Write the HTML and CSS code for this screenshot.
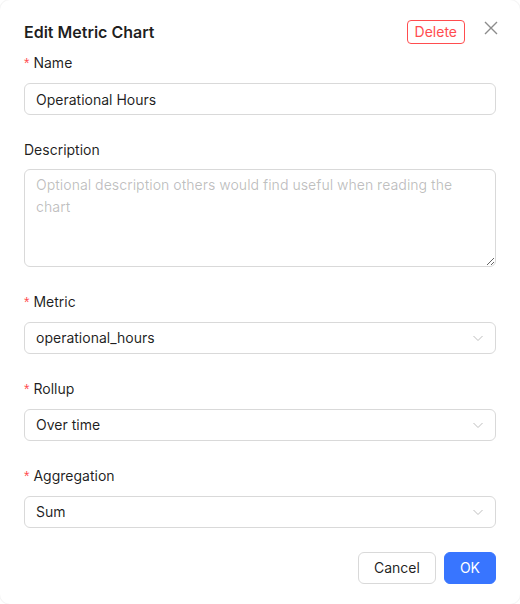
FILE: index.html
```html
<!DOCTYPE html>
<html>
<head>
<meta charset="utf-8">
<link rel="stylesheet" href="styles.css">
</head>
<body>
<div class="modal">
  <button class="close" aria-label="Close">
    <svg width="14" height="14" viewBox="0 0 14 14"><path d="M1 1L13 13M13 1L1 13" stroke="#8c8c8c" stroke-width="1.4" fill="none"/></svg>
  </button>
  <div class="header">
    <div class="title">Edit Metric Chart</div>
    <button class="btn-delete">Delete</button>
  </div>
  <div class="item item-tall">
    <label class="label"><span class="req">*</span>Name</label>
    <input class="input" type="text" value="Operational Hours">
  </div>
  <div class="item">
    <label class="label">Description</label>
    <textarea class="textarea" rows="4" placeholder="Optional description others would find useful when reading the chart"></textarea>
  </div>
  <div class="item item-tall">
    <label class="label"><span class="req">*</span>Metric</label>
    <div class="select"><span>operational_hours</span><svg class="arrow" width="12" height="12" viewBox="0 0 12 12"><path d="M1.5 4L6 8.5L10.5 4" stroke="#bfbfbf" stroke-width="1" fill="none"/></svg></div>
  </div>
  <div class="item item-tall">
    <label class="label"><span class="req">*</span>Rollup</label>
    <div class="select"><span>Over time</span><svg class="arrow" width="12" height="12" viewBox="0 0 12 12"><path d="M1.5 4L6 8.5L10.5 4" stroke="#bfbfbf" stroke-width="1" fill="none"/></svg></div>
  </div>
  <div class="item item-tall">
    <label class="label"><span class="req">*</span>Aggregation</label>
    <div class="select"><span>Sum</span><svg class="arrow" width="12" height="12" viewBox="0 0 12 12"><path d="M1.5 4L6 8.5L10.5 4" stroke="#bfbfbf" stroke-width="1" fill="none"/></svg></div>
  </div>
  <div class="footer">
    <button class="btn">Cancel</button>
    <button class="btn btn-primary">OK</button>
  </div>
</div>
</body>
</html>
```
FILE: styles.css
```css
* { box-sizing: border-box; }
html, body { margin: 0; padding: 0; background: #fff; }
body {
  font-family: Inter, "Liberation Sans", sans-serif;
  font-size: 14px;
  color: rgba(0,0,0,0.88);
}
.modal {
  position: relative;
  width: 520px;
  height: 604px;
  background: #fff;
  border-radius: 10px;
  box-shadow: 0 0 0 1px rgba(0,0,0,0.04);
  padding: 20px 24px;
}
.close {
  position: absolute;
  top: 17px;
  right: 18px;
  width: 22px;
  height: 22px;
  padding: 0;
  border: 0;
  background: transparent;
  display: flex;
  align-items: center;
  justify-content: center;
}
.header {
  display: flex;
  align-items: center;
  height: 24px;
  margin-bottom: 8px;
  padding-right: 31px;
}
.title {
  flex: 1;
  font-size: 16px;
  font-weight: 600;
  line-height: 22px;
  color: rgba(0,0,0,0.88);
}
.btn-delete {
  height: 24px;
  padding: 0 7px;
  border: 1px solid #ff4d4f;
  border-radius: 4px;
  background: #fff;
  color: #ff4d4f;
  font-family: inherit;
  font-size: 14px;
  line-height: 22px;
}
.item { margin-bottom: 24px; display: flex; flex-direction: column; }
.label {
  display: block;
  line-height: 22px;
  padding-bottom: 8px;
}
.item-tall .label { padding-bottom: 9px; }
.req {
  color: #ff4d4f;
  font-family: SimSun, "Liberation Sans", sans-serif;
  margin-right: 4px;
}
.input, .select {
  height: 32px;
  width: 100%;
  border: 1px solid #d9d9d9;
  border-radius: 6px;
  padding: 4px 11px;
  font-family: inherit;
  font-size: 14px;
  line-height: 22px;
  color: rgba(0,0,0,0.88);
  background: #fff;
}
.select {
  display: flex;
  align-items: center;
  justify-content: space-between;
}
.textarea {
  width: 100%;
  height: 98px;
  border: 1px solid #d9d9d9;
  border-radius: 6px;
  padding: 4px 11px;
  font-family: inherit;
  font-size: 14px;
  line-height: 22px;
  color: rgba(0,0,0,0.88);
  resize: vertical;
  display: block;
}
.textarea::placeholder { color: rgba(0,0,0,0.25); }
.footer {
  display: flex;
  justify-content: flex-end;
  gap: 8px;
}
.btn {
  height: 32px;
  padding: 4px 15px;
  border: 1px solid #d9d9d9;
  border-radius: 6px;
  background: #fff;
  color: rgba(0,0,0,0.88);
  font-family: inherit;
  font-size: 14px;
  line-height: 22px;
}
.btn-primary {
  background: #3875ff;
  border-color: #3875ff;
  color: #fff;
}
```
